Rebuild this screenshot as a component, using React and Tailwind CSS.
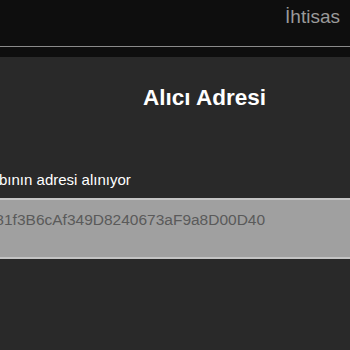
import React from 'react';

function App() {
  const address = '0x81f3B6cAf349D8240673aF9a8D00D40';

  return (
    <div className="h-[350px] w-[350px] overflow-hidden bg-[#292929] font-['Liberation_Sans',Arial,sans-serif]">
      {/* Top bar */}
      <div className="h-[46px] bg-[#0e0e0e] flex justify-end pr-[10px] pt-[3px]">
        <span className="text-[19px] text-[#9a9a9a]">İhtisas</span>
      </div>
      <div className="h-[11px] bg-[#0e0e0e] border-t border-[#8a8a8a]"></div>

      {/* Content */}
      <div className="-ml-[92px] w-[593px]">
        <h1 className="mt-[30px] text-center text-[22.5px] font-bold text-white leading-none">
          Alıcı Adresi
        </h1>
        <p className="mt-[62px] pl-[92px] -indent-[36px] text-[15px] text-white leading-none">
          Hesabının adresi alınıyor
        </p>
        <div className="mt-[11px] h-[61px] bg-[#a0a0a0] border-t-2 border-b-2 border-[#c4c4c4] pl-[92px]">
          <div className="pt-[12px] -indent-[21px] text-[15.5px] text-[#5a5a5a] leading-none">{address}</div>
        </div>
      </div>
    </div>
  );
}

export default App;
